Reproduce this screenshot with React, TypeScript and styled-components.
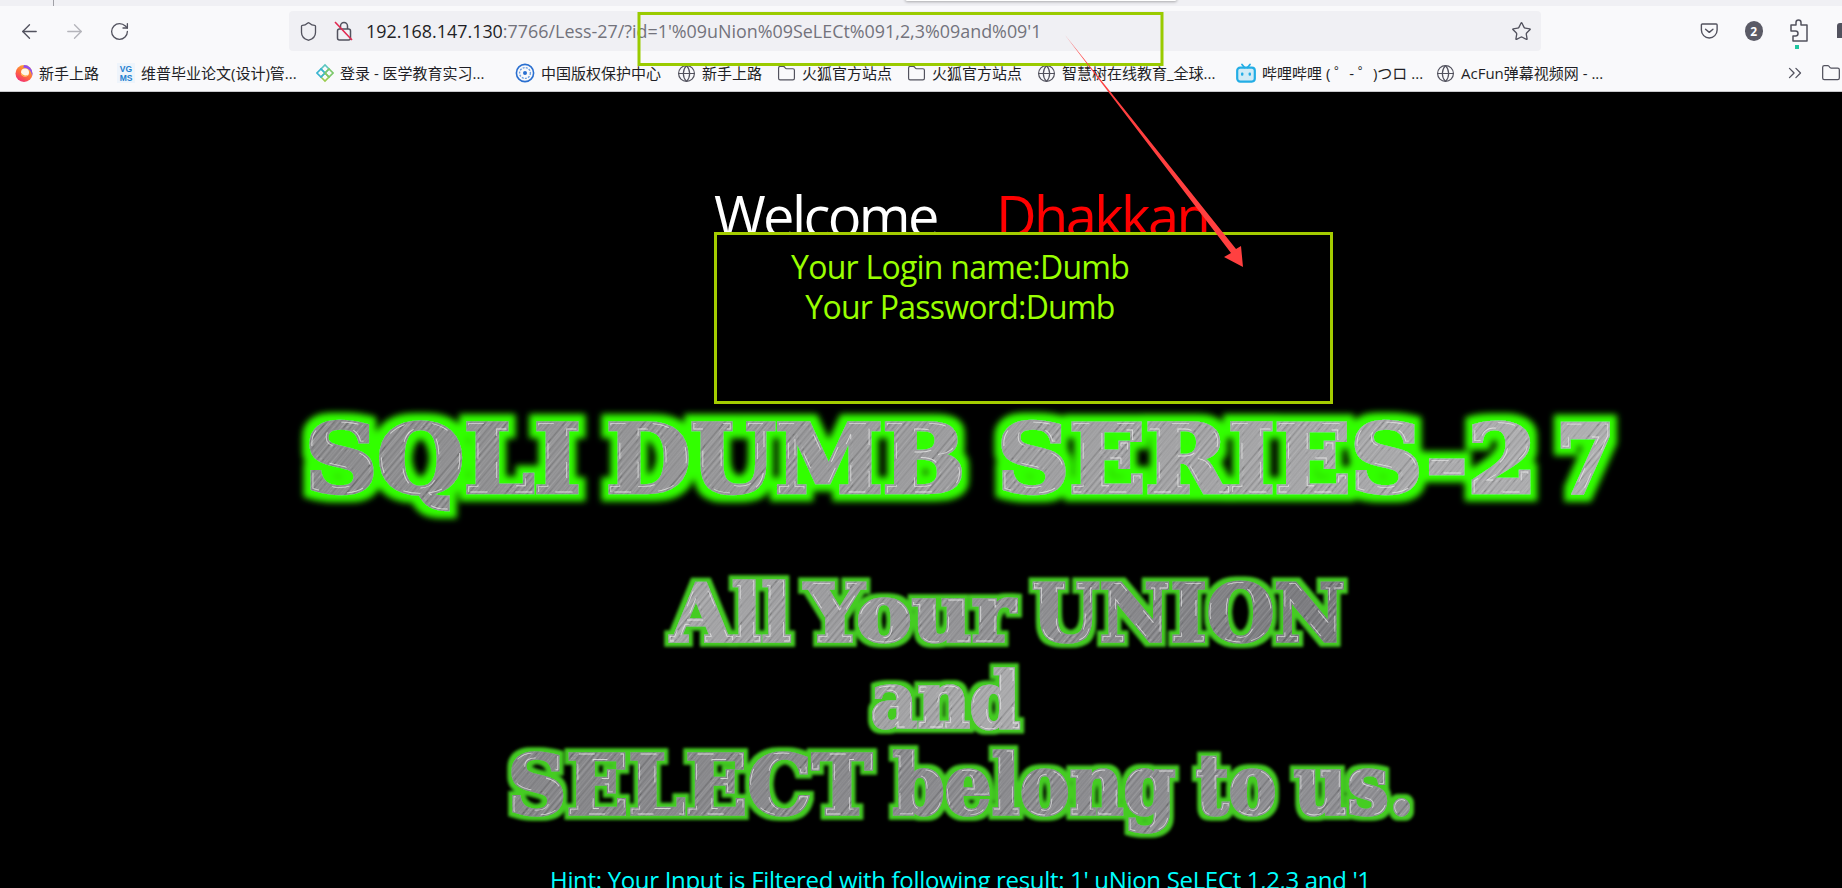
import React from "react";
import styled, { createGlobalStyle } from "styled-components";
import { ArrowLeft, ArrowRight, RotateCw, Shield, Star, Folder, Globe, ChevronsRight } from "lucide-react";

const Global = createGlobalStyle`
  html, body { margin: 0; padding: 0; background: #000; height: 100%; overflow: hidden; }
  * { box-sizing: border-box; }
`;

const UI = `"Open Sans", "Noto Sans CJK SC", sans-serif`;

const Page = styled.div`
  position: relative;
  width: 1842px;
  height: 888px;
  overflow: hidden;
  background: #000;
  font-family: ${UI};
`;
const Chrome = styled.header`
  height: 92px;
  background: #f9f9fb;
  border-bottom: 1px solid #c8c8cc;
  display: flex;
  flex-direction: column;
`;
const TabStrip = styled.div`
  height: 6px;
  background: #f0f0f4;
  padding-left: 53px;
`;
const TabDivider = styled.div`
  width: 1px;
  height: 6px;
  background: #a0a0a6;
`;
const Toolbar = styled.div`
  height: 49px;
  padding-top: 5px;
  display: flex;
  align-items: flex-start;
  color: #52525e;
`;
const NavButton = styled.div<{ $w: number; $dim?: boolean }>`
  width: ${(p) => p.$w}px;
  height: 40px;
  display: flex;
  align-items: center;
  justify-content: center;
  color: ${(p) => (p.$dim ? "#b4b4ba" : "#52525e")};
`;
const NavGroup = styled.div`
  width: 289px;
  padding-left: 7px;
  display: flex;
`;
const UrlBar = styled.div`
  width: 1252px;
  height: 40px;
  background: #f0f0f4;
  border-radius: 4px;
  display: flex;
  align-items: center;
  padding-left: 9px;
`;
const UrlIcon = styled.div<{ $w: number }>`
  width: ${(p) => p.$w}px;
  display: flex;
  align-items: center;
  justify-content: flex-start;
`;
const UrlText = styled.div`
  font-size: 17.9px;
  margin-left: -1px;
  color: #1f1f26;
  white-space: nowrap;
  flex: 1;
`;
const UrlDim = styled.span`
  color: #73737c;
`;
const ToolIcons = styled.div`
  flex: 1;
  display: flex;
  align-items: center;
  height: 40px;
  padding-left: 159px;
  gap: 26px;
  overflow: hidden;
`;
const Badge = styled.div`
  width: 20px;
  height: 20px;
  border-radius: 50%;
  background: #5b5b66;
  color: #fff;
  font: 700 12px "Open Sans", sans-serif;
  display: flex;
  align-items: center;
  justify-content: center;
`;
const ExtWrap = styled.div`
  position: relative;
  width: 20px;
  height: 24px;
`;
const ExtDot = styled.div`
  position: absolute;
  left: 6px;
  top: 26px;
  width: 4px;
  height: 4px;
  background: #1fc6a0;
`;
const MenuEdge = styled.div`
  width: 5px;
  height: 15px;
  margin-left: 2px;
  margin-bottom: 2px;
  flex: none;
  background: #52525e;
  border-top-left-radius: 3px;
`;
const Bookmarks = styled.nav`
  flex: 1;
  display: flex;
  align-items: center;
  padding-left: 15px;
  color: #1f1f26;
`;
const Bookmark = styled.div<{ $w: number }>`
  width: ${(p) => p.$w}px;
  display: flex;
  align-items: center;
  gap: 6px;
  font-size: 15px;
  white-space: nowrap;
  line-height: 20px;
`;
const BookmarkEnd = styled.div`
  margin-left: auto;
  margin-right: 1px;
  display: flex;
  align-items: center;
  gap: 15px;
  color: #52525e;
`;
const Main = styled.main`
  display: flex;
  flex-direction: column;
`;
const WelcomeLine = styled.div`
  height: 140px;
  overflow: hidden;
  display: flex;
  align-items: flex-end;
  padding-left: 714px;
  font-family: "Open Sans", sans-serif;
  font-size: 56px;
  line-height: 56px;
  letter-spacing: -2.6px;
`;
const WelcomeWord = styled.span`
  color: #fff;
  margin-bottom: -11px;
  width: 282px;
`;
const DhakkanWord = styled.span`
  color: #f00;
  margin-bottom: -11px;
`;
const LoginBox = styled.section`
  margin-left: 714px;
  width: 619px;
  height: 172px;
  border: 3px solid #a4cc00;
  background: #000;
  padding-top: 12px;
`;
const LoginLines = styled.div`
  width: 486px;
  text-align: center;
  font-size: 32px;
  line-height: 40px;
  color: #99ff00;
  letter-spacing: -0.75px;
`;
const ArtSvg = styled.svg`
  display: block;
  overflow: visible;
  flex: none;
`;
const Hint = styled.p`
  margin: 20px 0 0 550px;
  width: 840px;
  white-space: nowrap;
  font-size: 24px;
  line-height: 30px;
  letter-spacing: -0.32px;
  color: #00ffff;
`;
const Annotation = styled.svg`
  position: absolute;
  left: 0;
  top: 0;
  pointer-events: none;
`;
const Popup = styled.div`
  position: absolute;
  left: 905px;
  top: -4px;
  width: 272px;
  height: 5px;
  background: #fff;
  border-radius: 3px;
  box-shadow: 0 1px 3px rgba(0, 0, 0, 0.3);
`;

type Word = { t: string; x: number; w: number };

const streaks = Array.from({ length: 30 }, (_, i) => ({
  y: (i * 37) % 61,
  h: 0.5 + ((i * 7) % 5) * 0.2,
  light: (i * 5) % 3 !== 0,
  o: 0.05 + ((i * 11) % 7) * 0.014,
}));

function WordArt({ id, words, height, baseline, size, glow, spread, blur, from, to, heavy }: {
  id: string; words: Word[]; height: number; baseline: number; size: number;
  glow: string; spread: number; blur: number; from: string; to: string; heavy: number;
}) {
  const font = { fontFamily: '"DejaVu Serif", serif', fontWeight: 700, fontSize: size };
  const last = words[words.length - 1];
  return (
    <ArtSvg width={1842} height={height} viewBox={`0 0 1842 ${height}`}>
      <defs>
        <linearGradient id={`${id}-g`} gradientUnits="userSpaceOnUse" x1={words[0].x} x2={last.x + last.w} y1="0" y2="0">
          <stop offset="0" stopColor={from} />
          <stop offset="1" stopColor={to} />
        </linearGradient>
        <pattern id={`${id}-p`} width="61" height="61" patternUnits="userSpaceOnUse" patternTransform="rotate(-50)">
          {streaks.map((s, i) => (
            <rect key={i} x="0" y={s.y} width="61" height={s.h} fill={s.light ? "#fff" : "#000"} opacity={s.o} />
          ))}
        </pattern>
        <filter id={`${id}-f`} filterUnits="userSpaceOnUse" x="0" y="-40" width="1842" height={height + 80}>
          <feMorphology in="SourceAlpha" operator="dilate" radius={spread} result="d" />
          <feGaussianBlur in="d" stdDeviation={blur} result="b" />
          <feFlood floodColor={glow} />
          <feComposite in2="b" operator="in" result="c" />
          <feMerge>
            <feMergeNode in="c" />
            <feMergeNode in="SourceGraphic" />
          </feMerge>
        </filter>
      </defs>
      <g filter={`url(#${id}-f)`}>
        {words.map((w) => {
          const x = w.x + heavy / 2;
          const len = w.w - heavy;
          return (
            <g key={w.t} {...font}>
              <text x={x} y={baseline} textLength={len} lengthAdjust="spacingAndGlyphs" fill={`url(#${id}-g)`} stroke={`url(#${id}-g)`} strokeWidth={heavy} strokeLinejoin="miter">{w.t}</text>
              <text x={x} y={baseline} textLength={len} lengthAdjust="spacingAndGlyphs" fill="none" stroke={`url(#${id}-p)`} strokeWidth={heavy} strokeLinejoin="miter">{w.t}</text>
              <text x={x} y={baseline} textLength={len} lengthAdjust="spacingAndGlyphs" fill={`url(#${id}-p)`} stroke="#f4f4f4" strokeOpacity=".7" strokeWidth=".8" strokeDasharray="16 26">{w.t}</text>
            </g>
          );
        })}
      </g>
    </ArtSvg>
  );
}

const FirefoxIcon = () => (
  <svg width="18" height="20" viewBox="0 0 18 20">
    <defs>
      <linearGradient id="ffx" x1="0.8" y1="0" x2="0.2" y2="1">
        <stop offset="0" stopColor="#ffc02e" />
        <stop offset=".55" stopColor="#ff6a3a" />
        <stop offset="1" stopColor="#f0287e" />
      </linearGradient>
    </defs>
    <circle cx="9" cy="10.500" r="8.500" fill="url(#ffx)" />
    <path d="M9 2a8.500 8.500 0 0 1 8.500 8.500c0 1-.2 2-.5 2.800C17 8 13 4.500 8 4.500 8.500 3.500 9 2.800 9 2z" fill="#8f4cf2" />
    <circle cx="10" cy="9.500" r="4" fill="#fff6ea" />
    <path d="M6 9.500a4 4 0 0 0 7.500 2 5 5 0 0 1-7.500-2z" fill="#ffa436" />
  </svg>
);
const VgmsIcon = () => (
  <svg width="18" height="20" viewBox="0 0 18 20">
    <rect width="18" height="20" fill="#eef4fb" />
    <text x="9" y="9" textAnchor="middle" fontFamily='"Liberation Sans", sans-serif' fontWeight="700" fontSize="8.500" fill="#1d7fd0">VG</text>
    <text x="9" y="18" textAnchor="middle" fontFamily='"Liberation Sans", sans-serif' fontWeight="700" fontSize="8.500" fill="#1d7fd0">MS</text>
  </svg>
);
const CloverIcon = () => (
  <svg width="18" height="20" viewBox="0 0 18 20" fill="none" strokeWidth="1.600">
    <path d="M9 10 5 6l4-4 4 4z" stroke="#5cc6c0" />
    <path d="M9 10l-4 4 4 4 4-4z" stroke="#9ccc50" />
    <path d="M9 10 5 6 1 10l4 4z" stroke="#39b5d0" />
    <path d="M9 10l4-4 4 4-4 4z" stroke="#7cc86a" />
  </svg>
);
const CopyrightIcon = () => (
  <svg width="20" height="20" viewBox="0 0 20 20" fill="none">
    <circle cx="10" cy="10" r="8.600" stroke="#2a6fd0" strokeWidth="1.600" />
    <circle cx="10" cy="10" r="5.400" stroke="#6fa0e0" strokeWidth="1.400" strokeDasharray="2 1.200" />
    <circle cx="10" cy="10" r="2" fill="#2a6fd0" />
  </svg>
);
const BiliIcon = () => (
  <svg width="20" height="20" viewBox="0 0 20 20" fill="none">
    <path d="M6 1.500 8.500 4.500M14 1.500 11.500 4.500" stroke="#23ade5" strokeWidth="1.800" strokeLinecap="round" />
    <rect x="1.200" y="4.600" width="17.600" height="14" rx="3" stroke="#23ade5" strokeWidth="2.200" fill="#23ade5" fillOpacity=".18" />
    <rect x="5" y="9.500" width="2.400" height="3.200" rx="1" fill="#23ade5" />
    <rect x="12.600" y="9.500" width="2.400" height="3.200" rx="1" fill="#23ade5" />
  </svg>
);
const LockSlash = () => (
  <svg width="20" height="22" viewBox="0 0 20 22" fill="none">
    <path d="M6.500 9V6a3.500 3.500 0 0 1 7 0v3" stroke="#52525e" strokeWidth="1.500" />
    <rect x="3.500" y="9" width="13" height="11" rx="2" stroke="#52525e" strokeWidth="1.500" />
    <path d="M1 2l17 18" stroke="#e22850" strokeWidth="1.600" />
  </svg>
);
const PocketIcon = () => (
  <svg width="20" height="20" viewBox="0 0 20 20" fill="none" stroke="#52525e" strokeWidth="1.500">
    <path d="M2.500 2.500h15a1 1 0 0 1 1 1V9a8.500 8.500 0 0 1-17 0V3.500a1 1 0 0 1 1-1z" />
    <path d="M6 8l4 3.500L14 8" strokeLinecap="round" strokeLinejoin="round" />
  </svg>
);
const PuzzleIcon = () => (
  <svg width="20" height="24" viewBox="0 0 20 24" fill="none" stroke="#52525e" strokeWidth="1.500" strokeLinejoin="round">
    <path d="M7 6V3.500a2.500 2.500 0 0 1 5 0V6h6v16H4v-5h2.500a2.500 2.500 0 0 0 0-5H2V6z" />
  </svg>
);

const marks: { w: number; icon: React.ReactNode; label: string }[] = [
  { w: 102, icon: <FirefoxIcon />, label: "新手上路" },
  { w: 199, icon: <VgmsIcon />, label: "维普毕业论文(设计)管..." },
  { w: 199, icon: <CloverIcon />, label: "登录 - 医学教育实习..." },
  { w: 162, icon: <CopyrightIcon />, label: "中国版权保护中心" },
  { w: 100, icon: <Globe size={19} strokeWidth={1.5} color="#52525e" />, label: "新手上路" },
  { w: 130, icon: <Folder size={19} strokeWidth={1.5} color="#52525e" />, label: "火狐官方站点" },
  { w: 130, icon: <Folder size={19} strokeWidth={1.5} color="#52525e" />, label: "火狐官方站点" },
  { w: 199, icon: <Globe size={19} strokeWidth={1.5} color="#52525e" />, label: "智慧树在线教育_全球..." },
  { w: 200, icon: <BiliIcon />, label: "哔哩哔哩 ( ゜- ゜)つロ ..." },
  { w: 180, icon: <Globe size={19} strokeWidth={1.5} color="#52525e" />, label: "AcFun弹幕视频网 - ..." },
];

export default function App() {
  return (
    <Page>
      <Global />
      <Chrome>
        <TabStrip><TabDivider /></TabStrip>
        <Toolbar>
          <NavGroup>
            <NavButton $w={45}><ArrowLeft size={23} strokeWidth={1.4} /></NavButton>
            <NavButton $w={45} $dim><ArrowRight size={23} strokeWidth={1.4} /></NavButton>
            <NavButton $w={45}><RotateCw size={21} strokeWidth={1.5} /></NavButton>
          </NavGroup>
          <UrlBar>
            <UrlIcon $w={36}><Shield size={21} strokeWidth={1.5} /></UrlIcon>
            <UrlIcon $w={33}><LockSlash /></UrlIcon>
            <UrlText>192.168.147.130<UrlDim>:7766/Less-27/?id=1'%09uNion%09SeLECt%091,2,3%09and%09'1</UrlDim></UrlText>
            <UrlIcon $w={30}><Star size={21} strokeWidth={1.5} /></UrlIcon>
          </UrlBar>
          <ToolIcons>
            <PocketIcon />
            <Badge>2</Badge>
            <ExtWrap><PuzzleIcon /><ExtDot /></ExtWrap>
            <MenuEdge />
          </ToolIcons>
        </Toolbar>
        <Bookmarks>
          {marks.map((m, i) => (
            <Bookmark key={i} $w={m.w}>{m.icon}{m.label}</Bookmark>
          ))}
          <BookmarkEnd>
            <ChevronsRight size={22} strokeWidth={1.4} />
            <Folder size={20} strokeWidth={1.5} />
          </BookmarkEnd>
        </Bookmarks>
      </Chrome>
      <Main>
        <WelcomeLine>
          <WelcomeWord>Welcome</WelcomeWord>
          <DhakkanWord>Dhakkan</DhakkanWord>
        </WelcomeLine>
        <LoginBox>
          <LoginLines>
            Your Login name:Dumb<br />Your Password:Dumb
          </LoginLines>
        </LoginBox>
        <WordArt id="t" height={126} baseline={88} size={93} heavy={4.5} glow="#33ff00" spread={7} blur={3.2} from="#8a8a8c" to="#aeaeb0"
          words={[{ t: "SQLI", x: 303, w: 280 }, { t: "DUMB", x: 604, w: 363 }, { t: "SERIES-2", x: 995, w: 544 }, { t: "7", x: 1554, w: 63 }]} />
        <WordArt id="a" height={120} baseline={111} size={79} heavy={3.5} glow="#44cc22" spread={4} blur={1.8} from="#a6a6a8" to="#78787c"
          words={[{ t: "All", x: 669, w: 124 }, { t: "Your", x: 803, w: 214 }, { t: "UNION", x: 1030, w: 317 }]} />
        <WordArt id="b" height={95} baseline={77} size={76} heavy={3.5} glow="#44cc22" spread={4} blur={1.8} from="#a0a0a2" to="#aaaaac"
          words={[{ t: "and", x: 869, w: 153 }]} />
        <WordArt id="c" height={100} baseline={69} size={82} heavy={3.5} glow="#44cc22" spread={4} blur={1.8} from="#858588" to="#8e8e92"
          words={[{ t: "SELECT", x: 506, w: 368 }, { t: "belong", x: 891, w: 286 }, { t: "to", x: 1194, w: 84 }, { t: "us.", x: 1292, w: 124 }]} />
        <Hint>Hint: Your Input is Filtered with following result: 1' uNion SeLECt 1,2,3 and '1</Hint>
      </Main>
      <Popup />
      <Annotation width={1842} height={888} viewBox="0 0 1842 888">
        <rect x="639" y="13.500" width="523" height="51" fill="none" stroke="#9acb00" strokeWidth="3" />
        <polygon points="1065,35 1236,249 1241,246 1243,267 1224,257 1231,253" fill="#ff4040" />
      </Annotation>
    </Page>
  );
}
